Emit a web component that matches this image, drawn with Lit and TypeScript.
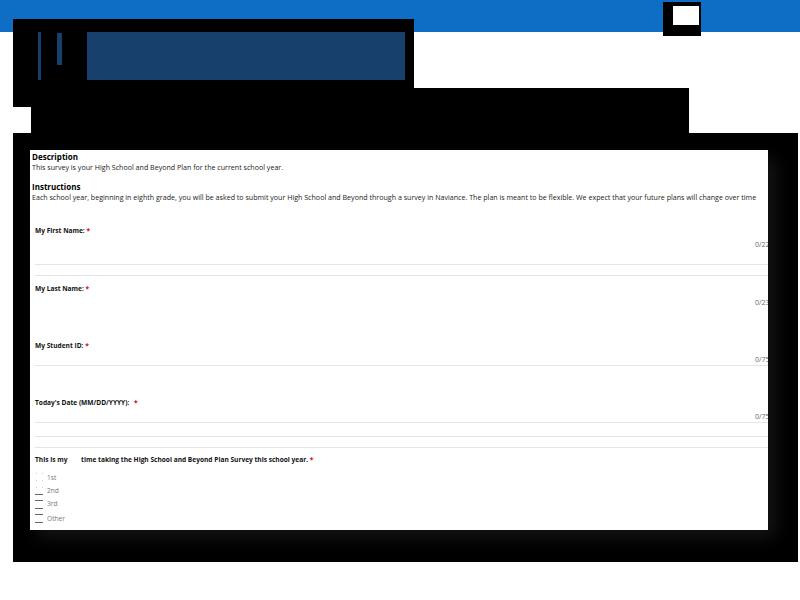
import { LitElement, html, css, svg } from "lit";
import { customElement } from "lit/decorators.js";

const fields = [
  { label: "My First Name:", count: "0/22", cls: "f1" },
  { label: "My Last Name:", count: "0/23", cls: "f2" },
  { label: "My Student ID:", count: "0/75", cls: "f3" },
  { label: "Today's Date (MM/DD/YYYY):", count: "0/75", cls: "f4" },
];
const options = [
  { text: "1st", cls: "o1" },
  { text: "2nd", cls: "o2" },
  { text: "3rd", cls: "o3" },
  { text: "Other", cls: "o4" },
];

function svgRect(x: number, y: number, w: number, h: number, fill: string) {
  return svg`<rect x=${x} y=${y} width=${w} height=${h} fill=${fill}></rect>`;
}

const radio = (cls: string) => {
  const top = cls === "o3" || cls === "o4";
  const bottom = cls !== "o1";
  const h = top ? 9 : 8;
  return html`<svg class="radio" width="8" height="9" viewBox="0 0 8 9" aria-hidden="true">
    ${top ? svgRect(0, 0, 8, 1, "#666") : svgRect(1, 0, 1, 1, "#ccc")}
    ${top ? "" : svgRect(7, 0, 1, 1, "#ccc")}
    ${bottom ? svgRect(0, h - 1, 8, 1, "#666") : svgRect(1, h - 1, 1, 1, "#ccc")}
    ${bottom ? "" : svgRect(7, h - 1, 1, 1, "#ccc")}
  </svg>`;
};

@customElement("app-root")
export class AppRoot extends LitElement {
  static styles = css`
    :host { display: block; width: 800px; height: 600px; overflow: hidden; background: #fff; font-family: "Open Sans", sans-serif; position: relative; }
    .topbar { height: 32px; background: #0e6ec5; }
    .user { position: absolute; left: 663px; top: 2px; width: 38px; height: 34px; background: #000; }
    .user i { position: absolute; left: 10px; top: 4px; width: 26px; height: 19px; background: #fff; }
    .brand { margin: -13px 0 0 13px; width: 401px; height: 69px; background: #000; display: flex; padding-top: 13px; box-sizing: border-box; }
    .b1 { margin-left: 25px; width: 3px; height: 48px; background: #17406d; }
    .b2 { margin: 1px 0 0 16px; width: 5px; height: 32px; background: #17406d; }
    .b3 { margin-left: 25px; width: 318px; height: 48px; background: #17406d; }
    .title-a { margin-left: 13px; width: 676px; height: 19px; background: #000; }
    .title-b { margin-left: 31px; width: 658px; height: 26px; background: #000; }
    .panel { margin-left: 13px; width: 785px; height: 429px; background: #000; padding: 17px 0 0 17px; box-sizing: border-box; overflow: hidden; }
    .card { width: 738px; height: 380px; background: #fff; box-shadow: 8px 8px 16px rgba(255,255,255,.08); overflow: hidden; color: #222; font-size: 7.1px; line-height: 10px; white-space: nowrap; padding: 2px 0 0 2px; box-sizing: border-box; }
    .head { font-size: 8px; font-weight: 700; color: #000; }
    .sec2 { margin-top: 10px; }
    .field { position: relative; margin-left: 3px; height: 57px; }
    .f1 { margin-top: 23px; height: 58px; }
    .label { font-size: 6.6px; font-weight: 700; line-height: 10px; color: #111; padding-top: 1px; }
    .req { color: #d0021b; }
    .f4 .req { margin-left: 3px; }
    .gap { display: inline-block; width: 12px; }
    .count { position: absolute; left: 720px; top: 15px; font-size: 7px; line-height: 10px; color: #667; }
    .rule-a, .rule-b, .rule-c { position: absolute; left: 0; width: 734px; height: 1px; background: #e5e5e5; display: none; }
    .f1 .rule-a { display: block; top: 39px; }
    .f1 .rule-b { display: block; top: 50px; }
    .f3 .rule-a, .f4 .rule-a { display: block; top: 25px; }
    .f4 .rule-b { display: block; top: 39px; }
    .f4 .rule-c { display: block; top: 50px; }
    .last { height: auto; }
    .options { margin: 8px 0 0 3px; display: flex; flex-direction: column; }
    .opt { display: flex; align-items: flex-start; height: 14px; font-size: 6.6px; line-height: 9px; color: #777; }
    .o2 { height: 13px; }
    .o2 .txt, .o3 .txt { margin-top: -1px; }
    .radio { display: block; flex: none; margin-right: 4px; }
  `;

  render() {
    return html`
      <div class="topbar"></div>
      <div class="user"><i></i></div>
      <div class="brand"><div class="b1"></div><div class="b2"></div><div class="b3"></div></div>
      <div class="title-a"></div>
      <div class="title-b"></div>
      <div class="panel">
        <div class="card">
          <div class="head">Description</div>
          <div>This survey is your High School and Beyond Plan for the current school year.</div>
          <div class="head sec2">Instructions</div>
          <div>Each school year, beginning in eighth grade, you will be asked to submit your High School and Beyond through a survey in Naviance. The plan is meant to be flexible. We expect that your future plans will change over time</div>
          ${fields.map(
            (f) => html`<div class="field ${f.cls}">
              <div class="label">${f.label} <span class="req">*</span></div>
              <div class="count">${f.count}</div>
              <div class="rule-a"></div><div class="rule-b"></div><div class="rule-c"></div>
            </div>`
          )}
          <div class="field last">
            <div class="label">This is my <span class="gap"></span>time taking the High School and Beyond Plan Survey this school year. <span class="req">*</span></div>
          </div>
          <div class="options">
            ${options.map((o) => html`<div class="opt ${o.cls}">${radio(o.cls)}<span class="txt">${o.text}</span></div>`)}
          </div>
        </div>
      </div>
    `;
  }
}
